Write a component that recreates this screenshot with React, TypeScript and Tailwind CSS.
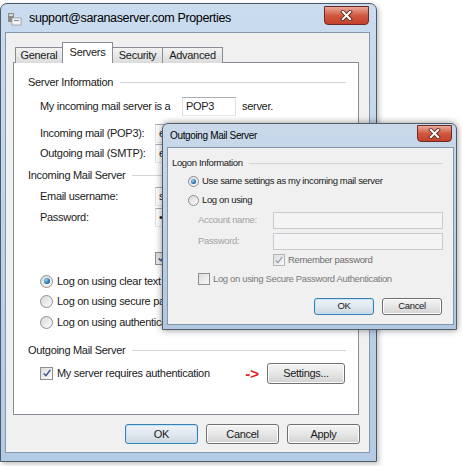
import React from "react";

type Kids = { children?: React.ReactNode; className?: string };

const Radio = ({ checked, small }: { checked?: boolean; small?: boolean }) => (
  <span
    className={`inline-flex shrink-0 items-center justify-center rounded-full border border-[#8e8f8f] bg-linear-to-br from-[#d9d9d9] to-[#fbfbfb] ${
      small ? "size-[11px]" : "size-[13px]"
    }`}
  >
    {checked && (
      <span
        className={`rounded-full bg-[radial-gradient(circle_at_35%_35%,#8fdaf8,#1b5e9e_70%)] ${
          small ? "size-[5px]" : "size-[6px]"
        }`}
      />
    )}
  </span>
);

const Check = ({ checked, small, dim }: { checked?: boolean; small?: boolean; dim?: boolean }) => (
  <span
    className={`inline-flex shrink-0 items-center justify-center border bg-linear-to-br from-[#dcdcdc] to-[#fbfbfb] ${
      dim ? "border-[#b5b5b5]" : "border-[#8e8f8f]"
    } ${small ? "size-[12px]" : "size-[13px]"}`}
  >
    {checked && (
      <svg viewBox="0 0 12 12" className="size-[10px]">
        <path
          d="M2 6.5 L4.8 9.2 L10 2.2"
          fill="none"
          stroke={dim ? "#9aa3b5" : "#3f5489"}
          strokeWidth="1.8"
        />
      </svg>
    )}
  </span>
);

const Btn = ({ children, className, def }: Kids & { def?: boolean }) => (
  <div
    className={`flex items-center justify-center rounded-[3px] border ${
      def
        ? "border-[#3c7fb1] bg-linear-to-b from-[#eef3f8] via-[#e1e8ef] to-[#cdd6df] shadow-[inset_0_0_0_1px_#bfe3f7]"
        : "border-[#707070] bg-linear-to-b from-[#f4f4f4] via-[#e6e6e6] to-[#d2d2d2] shadow-[inset_0_0_0_1px_#fcfcfc]"
    } ${className ?? ""}`}
  >
    {children}
  </div>
);

const Field = ({ children, className }: Kids) => (
  <div
    className={`flex items-center overflow-hidden border border-[#abadb3] border-x-[#dbdfe6] border-b-[#e3e9ef] bg-white px-[3px] ${
      className ?? ""
    }`}
  >
    {children}
  </div>
);

const Group = ({ label, className }: { label: string; className?: string }) => (
  <div className={`flex h-[20px] items-center pl-[14px] pr-[12px] ${className ?? ""}`}>
    <span>{label}</span>
    <div className="ml-[7px] h-px flex-1 bg-[#d0d4d8]" />
  </div>
);

const CloseX = ({ className }: { className: string }) => (
  <div
    className={`flex items-center justify-center rounded-b-[4px] border border-[#6d2a22] bg-linear-to-b from-[#e9a99c] via-[#d0583f] to-[#c4412b] ${className}`}
  >
    <svg viewBox="0 0 14 12" className="h-[11px] w-[13px]">
      <path d="M3 2 L11 10 M11 2 L3 10" stroke="#5b2a24" strokeWidth="4" strokeLinecap="square" />
      <path d="M3 2 L11 10 M11 2 L3 10" stroke="#ffffff" strokeWidth="2.2" strokeLinecap="square" />
    </svg>
  </div>
);

const Tab = ({ children, active, className }: Kids & { active?: boolean }) => (
  <div
    className={`-ml-px flex items-center justify-center border border-b-0 border-[#898c95] ${
      active
        ? "h-[21px] bg-white pb-[2px]"
        : "h-[16px] bg-linear-to-b from-[#f2f2f2] to-[#dcdcdc]"
    } ${className ?? ""}`}
  >
    {children}
  </div>
);

export default function App() {
  return (
    <div className="relative h-[466px] w-[462px] overflow-hidden bg-white font-['Liberation_Sans',Arial,sans-serif] text-[11px] tracking-[-0.3px] text-[#1a1a1a]">
      {/* main properties window */}
      <div className="mt-[3px] flex h-[459px] w-[377px] flex-col rounded-t-[7px] border border-[#4b5a6b] bg-linear-to-b from-[#cadcef] via-[#bed3ea] to-[#b4cbe5] shadow-[2px_2px_5px_rgba(0,0,0,0.25)]">
        <div className="flex h-[28px] items-start pl-[7px] pr-[7px]">
          <svg viewBox="0 0 14 13" className="mt-[9px] h-[13px] w-[14px]">
            <rect x="0" y="0" width="6" height="9" fill="#8c8c8c" />
            <rect x="1" y="1" width="4" height="2" fill="#d8d8d8" />
            <rect x="4" y="5" width="9" height="7" fill="#f4f4f4" stroke="#9a9a9a" strokeWidth="0.8" />
            <rect x="6" y="7" width="5" height="1" fill="#7b8aa0" />
          </svg>
          <span className="ml-[7px] mt-[7px] text-[12.5px] leading-[15px] tracking-[-0.35px] text-black">
            support@saranaserver.com Properties
          </span>
          <CloseX className="ml-auto mt-[2px] h-[19px] w-[45px]" />
        </div>

        <div className="pl-[4px] pr-[6px]">
          <div className="flex h-[421px] flex-col border border-[#8497ab] bg-[#f0f0f0]">
            <div className="relative z-10 flex h-[30px] items-end pl-[10px]">
              <Tab className="w-[48px]">General</Tab>
              <Tab active className="w-[51px]">
                Servers
              </Tab>
              <Tab className="w-[51px]">Security</Tab>
              <Tab className="w-[61px]">Advanced</Tab>
            </div>

            <div className="-mt-px ml-[7px] flex h-[353px] w-[346px] flex-col border border-[#898c95] bg-white">
              <Group label="Server Information" className="mt-[9px]" />
              <div className="mt-[4px] flex h-[20px] items-center pl-[26px]">
                <span className="w-[142px]">My incoming mail server is a</span>
                <Field className="h-[19px] w-[54px]">POP3</Field>
                <span className="ml-[6px]">server.</span>
              </div>
              <div className="mt-[7px] flex h-[20px] items-center pl-[26px]">
                <span className="w-[115px]">Incoming mail (POP3):</span>
                <Field className="h-[19px] w-[190px]">email.saranaserver.com</Field>
              </div>
              <div className="flex h-[20px] items-center pl-[26px]">
                <span className="w-[115px]">Outgoing mail (SMTP):</span>
                <Field className="h-[19px] w-[190px]">email.saranaserver.com</Field>
              </div>
              <Group label="Incoming Mail Server" className="mt-[2px]" />
              <div className="mt-px flex h-[20px] items-center pl-[26px]">
                <span className="w-[115px]">Email username:</span>
                <Field className="h-[19px] w-[190px]">support@saranaserver.com</Field>
              </div>
              <div className="mt-px flex h-[20px] items-center pl-[26px]">
                <span className="w-[115px]">Password:</span>
                <Field className="h-[19px] w-[190px]">••••••••</Field>
              </div>
              <div className="mt-[21px] flex h-[20px] items-center gap-[4px] pl-[141px]">
                <Check checked />
                <span>Remember password</span>
              </div>
              <div className="mt-[3px] flex h-[20px] items-center gap-[4px] pl-[26px]">
                <Radio checked />
                <span>Log on using clear text authentication</span>
              </div>
              <div className="flex h-[20px] items-center gap-[4px] pl-[26px]">
                <Radio />
                <span>Log on using secure password authentication</span>
              </div>
              <div className="mt-px flex h-[20px] items-center gap-[4px] pl-[26px]">
                <Radio />
                <span>Log on using authenticated security</span>
              </div>
              <Group label="Outgoing Mail Server" className="mt-[8px]" />
              <div className="mt-[3px] flex h-[20px] items-center pl-[26px] pr-[13px]">
                <Check checked />
                <span className="ml-[4px]">My server requires authentication</span>
                <span className="ml-auto text-[15px] font-bold leading-none tracking-[0px] text-[#e3211c]">
                  -&gt;
                </span>
                <Btn className="ml-[8px] h-[21px] w-[78px]">Settings...</Btn>
              </div>
            </div>

            <div className="mt-[9px] flex justify-end gap-[8px] pr-[9px]">
              <Btn def className="h-[20px] w-[73px]">
                OK
              </Btn>
              <Btn className="h-[20px] w-[73px]">Cancel</Btn>
              <Btn className="h-[20px] w-[73px]">Apply</Btn>
            </div>
          </div>
        </div>
      </div>

      {/* Outgoing Mail Server dialog, lying over the properties window */}
      <div className="absolute left-[162px] top-[123px] flex h-[207px] w-[295px] flex-col rounded-t-[6px] border border-[#505d6d] bg-linear-to-b from-[#c9d9ea] via-[#bcd0e6] to-[#b2c8e1] text-[9.5px] tracking-[-0.35px] shadow-[0_0_7px_rgba(0,0,0,0.45)]">
        <div className="flex h-[23px] items-start pl-[7px] pr-[4px]">
          <span className="mt-[6px] text-[10px] leading-[12px] text-black">Outgoing Mail Server</span>
          <CloseX className="ml-auto mt-px h-[17px] w-[35px]" />
        </div>
        <div className="pl-[4px] pr-[2px]">
          <div className="flex h-[178px] flex-col border border-[#8497ab] bg-[#f0f0f0]">
            <div className="mt-[7px] flex h-[16px] items-center pl-[4px] pr-[11px]">
              <span>Logon Information</span>
              <div className="ml-[6px] h-px flex-1 bg-[#d0d4d8]" />
            </div>
            <div className="mt-[2px] flex h-[16px] items-center gap-[3px] pl-[20px]">
              <Radio checked small />
              <span>Use same settings as my incoming mail server</span>
            </div>
            <div className="mt-[3px] flex h-[16px] items-center gap-[3px] pl-[20px]">
              <Radio small />
              <span>Log on using</span>
            </div>
            <div className="mt-[4px] flex h-[17px] items-center pl-[30px] text-[#a3a3a3]">
              <span className="w-[75px]">Account name:</span>
              <div className="h-[17px] w-[170px] border border-[#c6c9cf] bg-[#f4f4f4]" />
            </div>
            <div className="mt-[4px] flex h-[17px] items-center pl-[30px] text-[#a3a3a3]">
              <span className="w-[75px]">Password:</span>
              <div className="h-[17px] w-[170px] border border-[#c6c9cf] bg-[#f4f4f4]" />
            </div>
            <div className="mt-[2px] flex h-[16px] items-center gap-[3px] pl-[105px] text-[#6f6f6f]">
              <Check checked small dim />
              <span>Remember password</span>
            </div>
            <div className="mt-[3px] flex h-[16px] items-center gap-[3px] pl-[30px] text-[#7a7a7a]">
              <Check small />
              <span>Log on using Secure Password Authentication</span>
            </div>
            <div className="mt-[11px] flex justify-end gap-[8px] pr-[11px]">
              <Btn def className="h-[17px] w-[60px]">
                OK
              </Btn>
              <Btn className="h-[17px] w-[60px]">Cancel</Btn>
            </div>
          </div>
        </div>
      </div>
    </div>
  );
}
